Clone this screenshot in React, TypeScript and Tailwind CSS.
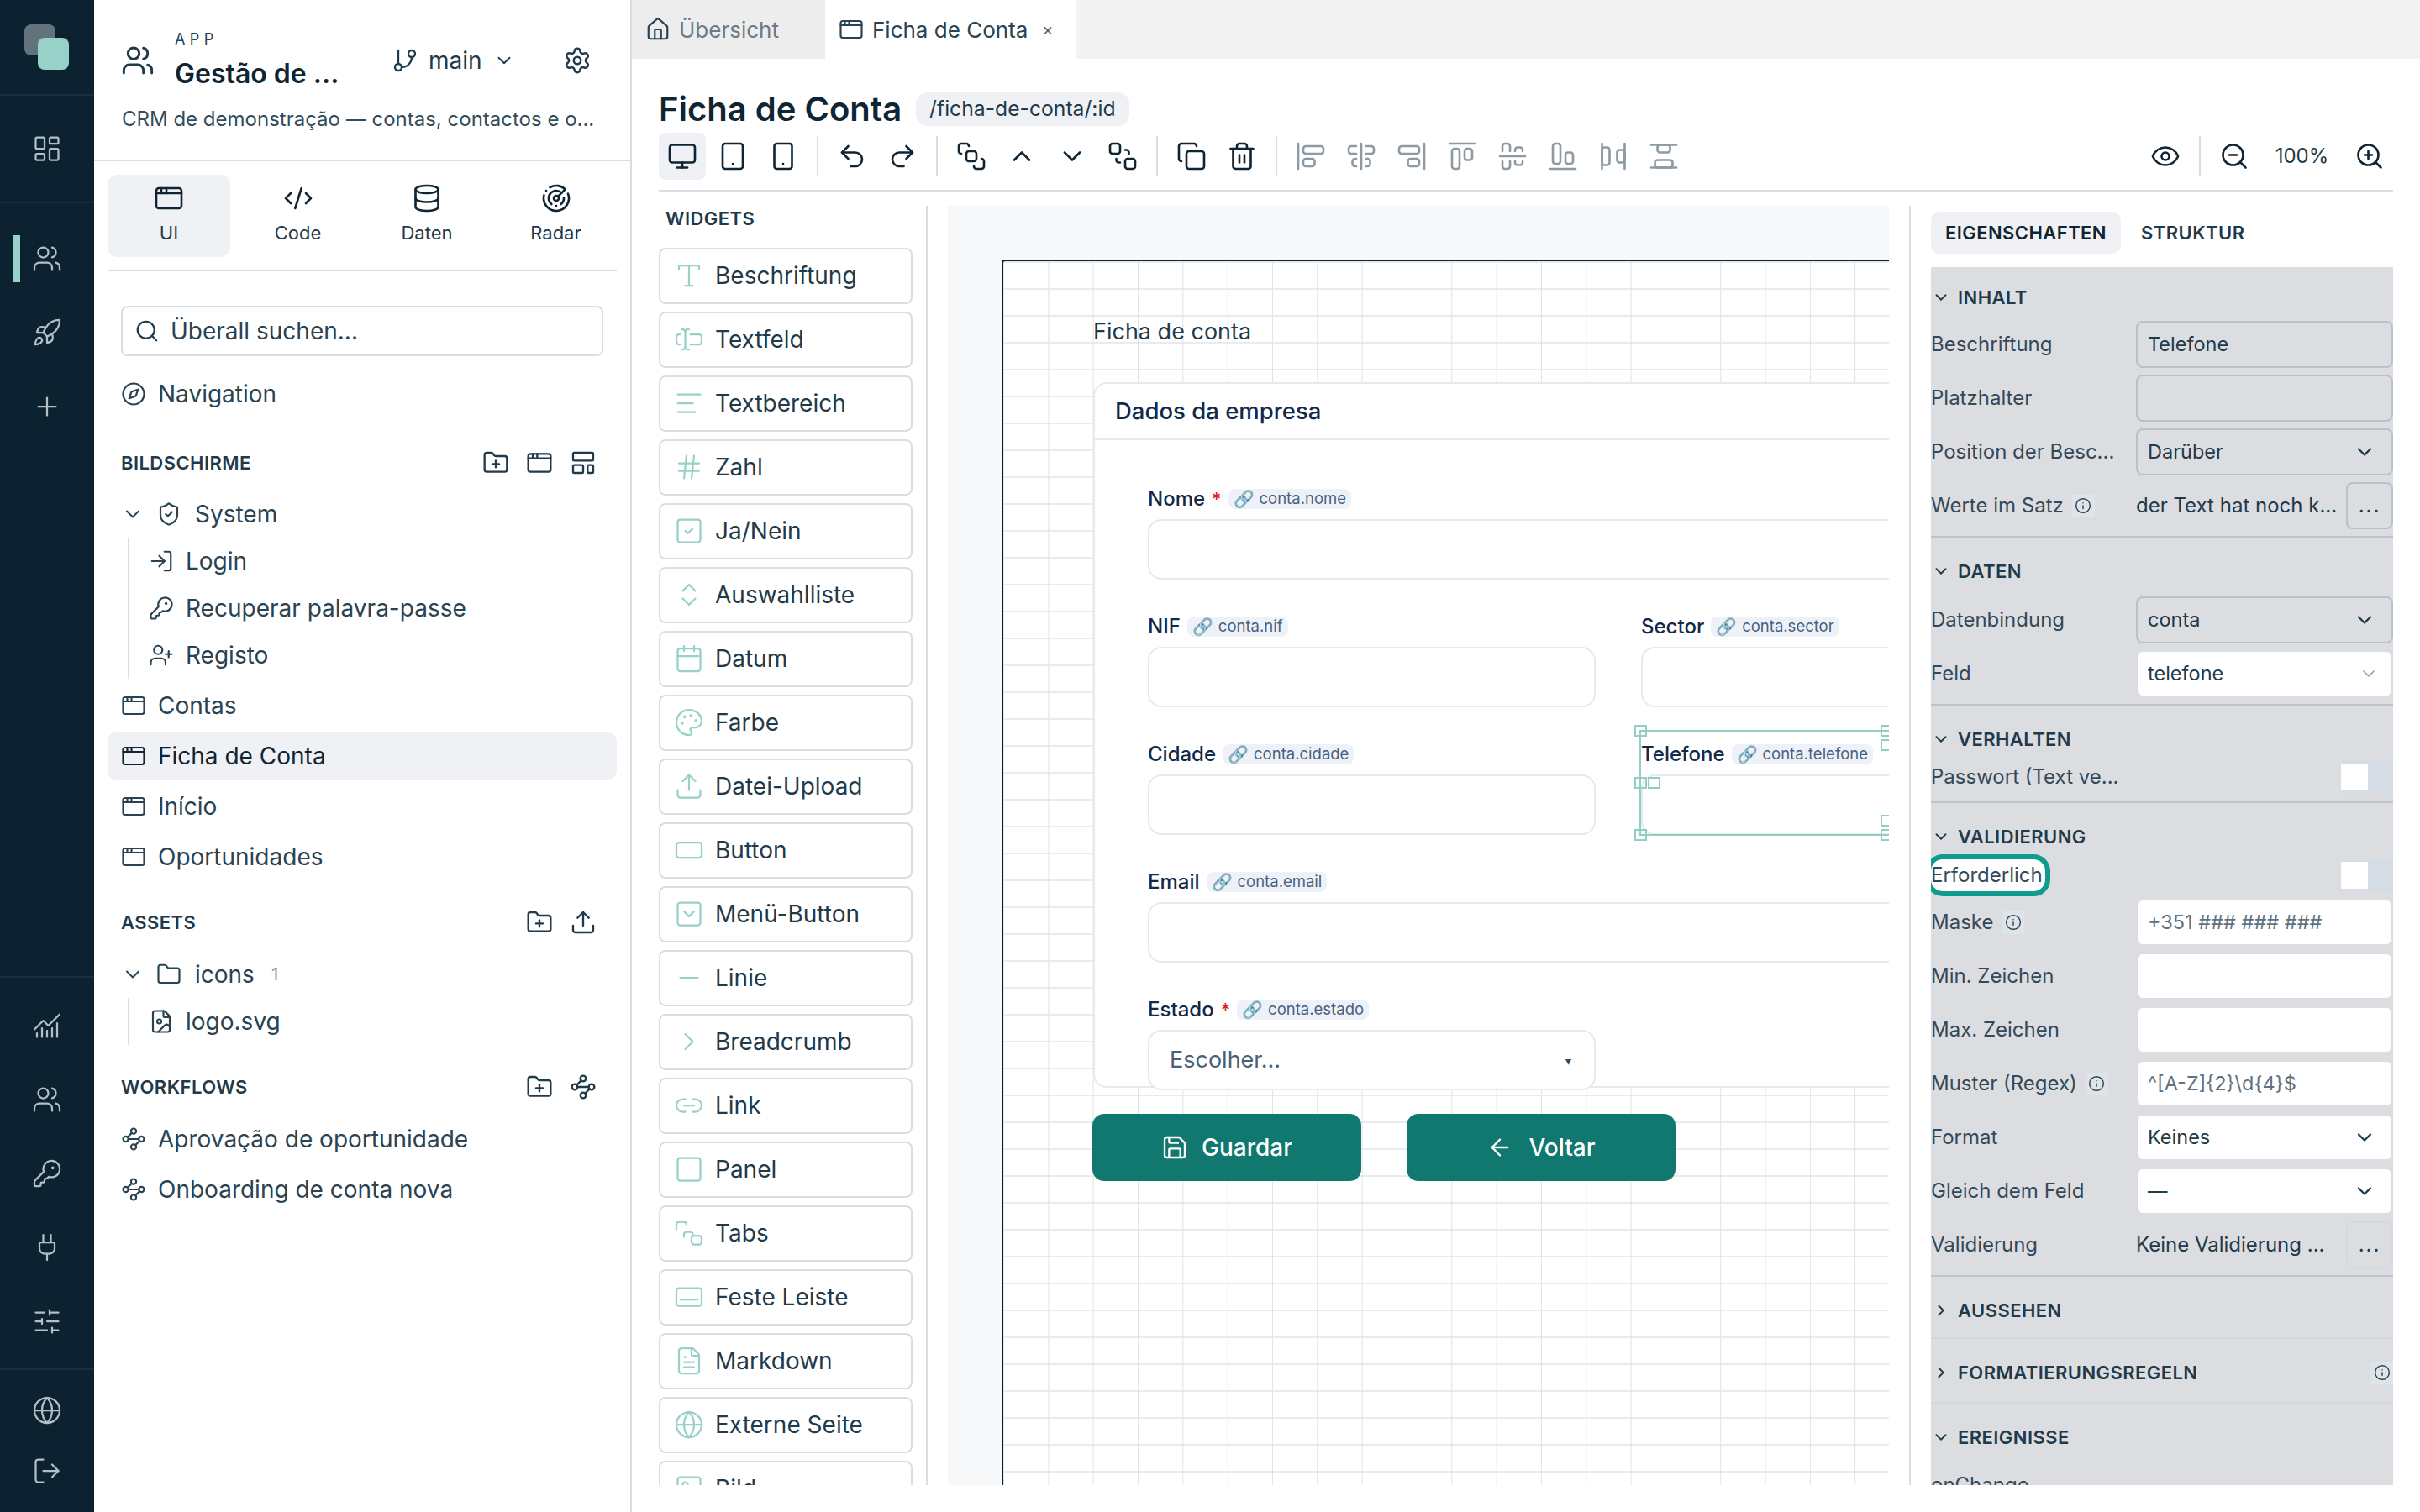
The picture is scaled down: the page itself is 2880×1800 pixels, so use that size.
import type { ReactNode } from 'react';
import {
  AlignCenterHorizontal, AlignCenterVertical, AlignEndHorizontal, AlignEndVertical,
  AlignHorizontalSpaceBetween, AlignLeft, AlignStartHorizontal, AlignStartVertical,
  AlignVerticalSpaceBetween, AppWindow, ArrowLeft, BringToFront, Calendar,
  ChartNoAxesCombined, ChevronDown, ChevronRight, ChevronsUpDown, ChevronUp, CodeXml, Compass, Copy,
  Database, Eye, FileImage, FileText, Folder, FolderPlus, GitBranch, Globe, Hash, House, Image,
  Info, KeyRound, LayoutDashboard, LayoutTemplate, Link2, LogIn, LogOut, Minus, Monitor, Palette,
  Plug, Plus, Radar, RectangleHorizontal, Redo2, Rocket, Save, Search, SendToBack, Settings, ShieldCheck,
  SlidersHorizontal, Smartphone, Square, SquareCheck, SquareChevronDown, Tablet, TextCursorInput,
  Trash2, Type, Undo2, Upload, UserPlus, Users, Waypoints, ZoomIn, ZoomOut,
} from 'lucide-react';

function TabsIcon({ size = 36, className = '' }: { size?: number; className?: string }) {
  return (
    <svg width={size} height={size} viewBox="0 0 24 24" fill="none" stroke="currentColor" strokeWidth={1.5} strokeLinecap="round" strokeLinejoin="round" className={className}>
      <path d="M2 9V5a2 2 0 0 1 2-2h4a2 2 0 0 1 2 2" />
      <path d="M8 15v-2a2 2 0 0 1 2-2h3a2 2 0 0 1 2 2" />
      <rect x="14" y="14" width="8" height="7" rx="2" />
    </svg>
  );
}

function BarIcon({ size = 36, className = '' }: { size?: number; className?: string }) {
  return (
    <svg width={size} height={size} viewBox="0 0 24 24" fill="none" stroke="currentColor" strokeWidth={1.5} strokeLinecap="round" strokeLinejoin="round" className={className}>
      <rect x="2" y="5" width="20" height="14" rx="2" />
      <path d="M5 14h14" />
    </svg>
  );
}

const WIDGETS = [
  { label: 'Beschriftung', icon: Type },
  { label: 'Textfeld', icon: TextCursorInput },
  { label: 'Textbereich', icon: AlignLeft },
  { label: 'Zahl', icon: Hash },
  { label: 'Ja/Nein', icon: SquareCheck },
  { label: 'Auswahlliste', icon: ChevronsUpDown },
  { label: 'Datum', icon: Calendar },
  { label: 'Farbe', icon: Palette },
  { label: 'Datei-Upload', icon: Upload },
  { label: 'Button', icon: RectangleHorizontal },
  { label: 'Menü-Button', icon: SquareChevronDown },
  { label: 'Linie', icon: Minus },
  { label: 'Breadcrumb', icon: ChevronRight },
  { label: 'Link', icon: Link2 },
  { label: 'Panel', icon: Square },
  { label: 'Tabs', icon: TabsIcon },
  { label: 'Feste Leiste', icon: BarIcon },
  { label: 'Markdown', icon: FileText },
  { label: 'Externe Seite', icon: Globe },
  { label: 'Bild', icon: Image },
];

function RailIcon({ children, active = false }: { children: ReactNode; active?: boolean }) {
  return (
    <div className="relative flex h-[88px] items-center justify-center text-[#b4bfc5]">
      {active && <div className="absolute left-[16px] top-[16px] h-[56px] w-[8px] bg-[#97d1c7]" />}
      {children}
    </div>
  );
}

function Rail() {
  const p = { size: 36, strokeWidth: 1.5 };
  return (
    <aside className="flex h-full w-[112px] shrink-0 flex-col bg-[#0d2230]">
      <div className="relative h-[114px] shrink-0 border-b-2 border-[#16303f]">
        <div className="absolute left-[29px] top-[29px] h-[37px] w-[37px] rounded-[8px] bg-[#64727d]" />
        <div className="absolute left-[45px] top-[45px] h-[38px] w-[37px] rounded-[8px] bg-[#97d1c7]" />
      </div>
      <div className="flex h-[128px] shrink-0 items-center justify-center border-b-2 border-[#16303f] text-[#b4bfc5]">
        <LayoutDashboard {...p} />
      </div>
      <div className="pt-[22px]">
        <RailIcon active><Users {...p} /></RailIcon>
        <RailIcon><Rocket {...p} /></RailIcon>
        <RailIcon><Plus {...p} /></RailIcon>
      </div>
      <div className="flex-1" />
      <div className="border-t-2 border-[#16303f] pt-[13px]">
        <RailIcon><ChartNoAxesCombined {...p} /></RailIcon>
        <RailIcon><Users {...p} /></RailIcon>
        <RailIcon><KeyRound {...p} /></RailIcon>
        <RailIcon><Plug {...p} /></RailIcon>
        <RailIcon><SlidersHorizontal {...p} /></RailIcon>
      </div>
      <div className="mt-[12px] border-t-2 border-[#16303f] pb-[20px] pt-[5px]">
        <div className="flex h-[86px] items-center justify-center text-[#b4bfc5]"><Globe {...p} /></div>
        <div className="flex h-[58px] items-center justify-center text-[#b4bfc5]"><LogOut {...p} /></div>
      </div>
    </aside>
  );
}

function SectionHead({ title, children }: { title: string; children: ReactNode }) {
  return (
    <div className="flex h-[40px] items-center justify-between pl-[32px] pr-[40px] text-[#1f3a4a]">
      <span className="text-[22px] font-semibold tracking-[0.02em] text-[#1f3a4a]">{title}</span>
      <div className="flex gap-[20px]">{children}</div>
    </div>
  );
}

function TreeRow({ icon, label, indent = 0, active = false }: { icon: ReactNode; label: string; indent?: number; active?: boolean }) {
  return (
    <div className={`flex h-[56px] items-center gap-[14px] rounded-[10px] text-[28px] ${active ? 'bg-[#eff1f5] text-[#0f2533]' : 'text-[#2a4352]'} ${indent ? 'pl-[49px]' : 'pl-[16px]'}`}>
      {icon}
      <span>{label}</span>
    </div>
  );
}

function Sidebar() {
  const t = { size: 30, strokeWidth: 1.75 };
  const h = { size: 32, strokeWidth: 1.75 };
  const tabs = [
    { label: 'UI', icon: AppWindow, active: true },
    { label: 'Code', icon: CodeXml },
    { label: 'Daten', icon: Database },
    { label: 'Radar', icon: Radar },
  ];
  return (
    <aside className="flex h-full w-[640px] shrink-0 flex-col border-r-2 border-[#d8dee5] text-[#2a4352]">
      <div className="h-[192px] shrink-0 border-b-2 border-[#d8dee5]">
        <div className="flex h-[114px] items-center pl-[32px] pt-[30px]">
          <Users size={40} strokeWidth={1.75} className="text-[#1f3a4a]" />
          <div className="ml-[24px] w-[258px] self-start pt-[6px]">
            <div className="text-[18px] leading-[22px] tracking-[0.3em] text-[#2a4352]">APP</div>
            <div className="mt-[10px] text-[32px] font-semibold leading-[40px] text-[#0f2533]">Gestão de ...</div>
          </div>
          <GitBranch size={32} strokeWidth={1.75} className="text-[#1f3a4a]" />
          <span className="ml-[12px] text-[28px] text-[#1f3a4a]">main</span>
          <ChevronDown size={26} strokeWidth={1.75} className="ml-[13px] text-[#1f3a4a]" />
          <Settings size={34} strokeWidth={1.75} className="ml-[57px] text-[#1f3a4a]" />
        </div>
        <div className="mt-[12px] pl-[33px] text-[24px] leading-[32px] text-[#354c5a]">CRM de demonstração — contas, contactos e o...</div>
      </div>

      <div className="mx-[16px] mt-[16px] flex h-[115px] shrink-0 gap-[7.5px] border-b-2 border-[#d8dee5]">
        {tabs.map(tab => (
          <div key={tab.label} className={`flex h-[98px] w-[146px] shrink-0 flex-col items-center rounded-[12px] pt-[10px] ${tab.active ? 'bg-[#eff1f5]' : ''}`}>
            <tab.icon size={36} strokeWidth={1.75} className="text-[#0f2533]" />
            <span className="mt-[9px] text-[22px] leading-[28px] text-[#1f3a4a]">{tab.label}</span>
          </div>
        ))}
      </div>

      <div className="mx-[32px] mt-[41px] flex h-[60px] shrink-0 items-center rounded-[8px] border-2 border-[#d8dee5] pl-[14px]">
        <Search size={30} strokeWidth={1.75} className="text-[#1f3a4a]" />
        <span className="ml-[13px] text-[28px] text-[#2a4352]">Überall suchen...</span>
      </div>

      <div className="mx-[16px] mt-[17px]">
        <TreeRow icon={<Compass {...t} />} label="Navigation" />
      </div>

      <div className="mt-[34px]">
        <SectionHead title="BILDSCHIRME">
          <FolderPlus {...h} /><AppWindow {...h} /><LayoutTemplate {...h} />
        </SectionHead>
      </div>

      <div className="mx-[16px] mt-[13px] flex flex-col">
        <div className="flex h-[56px] items-center pl-[16px] text-[28px]">
          <ChevronDown size={28} strokeWidth={1.75} />
          <ShieldCheck size={30} strokeWidth={1.75} className="ml-[14px]" />
          <span className="ml-[16px]">System</span>
        </div>
        <div className="relative">
          <div className="absolute bottom-0 left-[24px] top-0 w-[2px] bg-[#d8dee5]" />
          <TreeRow indent={1} icon={<LogIn {...t} />} label="Login" />
          <TreeRow indent={1} icon={<KeyRound {...t} />} label="Recuperar palavra-passe" />
          <TreeRow indent={1} icon={<UserPlus {...t} />} label="Registo" />
        </div>
        <div className="mt-[4px] flex flex-col gap-[4px]">
          <TreeRow icon={<AppWindow {...t} />} label="Contas" />
          <TreeRow icon={<AppWindow {...t} />} label="Ficha de Conta" active />
          <TreeRow icon={<AppWindow {...t} />} label="Início" />
          <TreeRow icon={<AppWindow {...t} />} label="Oportunidades" />
        </div>
      </div>

      <div className="mt-[30px]">
        <SectionHead title="ASSETS">
          <FolderPlus {...h} /><Upload {...h} />
        </SectionHead>
      </div>

      <div className="mx-[16px] mt-[14px]">
        <div className="flex h-[56px] items-center pl-[16px] text-[28px]">
          <ChevronDown size={28} strokeWidth={1.75} />
          <Folder size={30} strokeWidth={1.75} className="ml-[14px]" />
          <span className="ml-[16px]">icons</span>
          <span className="ml-[20px] text-[20px] text-[#7b8a94]">1</span>
        </div>
        <div className="relative">
          <div className="absolute bottom-0 left-[24px] top-0 w-[2px] bg-[#d8dee5]" />
          <TreeRow indent={1} icon={<FileImage {...t} />} label="logo.svg" />
        </div>
      </div>

      <div className="mt-[30px]">
        <SectionHead title="WORKFLOWS">
          <FolderPlus {...h} /><Waypoints {...h} />
        </SectionHead>
      </div>

      <div className="mx-[16px] mt-[14px] flex flex-col gap-[4px]">
        <TreeRow icon={<Waypoints {...t} />} label="Aprovação de oportunidade" />
        <TreeRow icon={<Waypoints {...t} />} label="Onboarding de conta nova" />
      </div>
    </aside>
  );
}

function ToolBtn({ icon: Icon, active = false, muted = false }: { icon: typeof Monitor; active?: boolean; muted?: boolean }) {
  return (
    <div className={`flex h-[56px] w-[56px] shrink-0 items-center justify-center rounded-[8px] ${active ? 'bg-[#eff1f5]' : ''} ${muted ? 'text-[#8d9aa3]' : 'text-[#0f2533]'}`}>
      <Icon size={36} strokeWidth={1.75} />
    </div>
  );
}

function Sep() {
  return <div className="mx-[8px] h-[48px] w-[2px] shrink-0 bg-[#d8dee5]" />;
}

function Toolbar() {
  return (
    <div className="mt-[8px] flex items-center gap-[4px] border-b-2 border-[#d8dee5] pb-[12px]">
      <ToolBtn icon={Monitor} active />
      <ToolBtn icon={Tablet} />
      <ToolBtn icon={Smartphone} />
      <Sep />
      <ToolBtn icon={Undo2} />
      <ToolBtn icon={Redo2} />
      <Sep />
      <ToolBtn icon={BringToFront} />
      <ToolBtn icon={ChevronUp} />
      <ToolBtn icon={ChevronDown} />
      <ToolBtn icon={SendToBack} />
      <Sep />
      <ToolBtn icon={Copy} />
      <ToolBtn icon={Trash2} />
      <Sep />
      <ToolBtn icon={AlignStartVertical} muted />
      <ToolBtn icon={AlignCenterVertical} muted />
      <ToolBtn icon={AlignEndVertical} muted />
      <ToolBtn icon={AlignStartHorizontal} muted />
      <ToolBtn icon={AlignCenterHorizontal} muted />
      <ToolBtn icon={AlignEndHorizontal} muted />
      <ToolBtn icon={AlignHorizontalSpaceBetween} muted />
      <ToolBtn icon={AlignVerticalSpaceBetween} muted />
      <div className="flex-1" />
      <ToolBtn icon={Eye} />
      <Sep />
      <ToolBtn icon={ZoomOut} />
      <span className="w-[97px] text-center text-[24px] text-[#1f3a4a]">100%</span>
      <ToolBtn icon={ZoomIn} />
    </div>
  );
}

function WidgetList() {
  return (
    <div className="h-full w-[320px] shrink-0 overflow-hidden border-r-2 border-[#d8dee5]">
      <div className="flex h-[30px] items-center pl-[8px] text-[22px] font-semibold tracking-[0.02em] text-[#1f3a4a]">WIDGETS</div>
      <div className="mt-[20px] flex w-[302px] flex-col gap-[9px]">
        {WIDGETS.map(w => (
          <div key={w.label} className="flex h-[67px] shrink-0 items-center rounded-[8px] border-2 border-[#d8dee5] pb-[1px] pl-[16px] text-[28px] text-[#1f3a4a]">
            <w.icon size={36} strokeWidth={1.5} className="text-[#97d1c7]" />
            <span className="ml-[13px]">{w.label}</span>
          </div>
        ))}
      </div>
    </div>
  );
}

function Tag({ text }: { text: string }) {
  return (
    <span className="ml-[8px] inline-flex h-[24px] items-center rounded-[8px] bg-[#eef2f8] px-[6px] text-[18.5px] font-normal text-[#466280]">
      <span className="mr-[6px] text-[20px]">🔗</span>
      {text}
    </span>
  );
}

function FieldLabel({ label, tag, required = false }: { label: string; tag: string; required?: boolean }) {
  return (
    <div className="flex h-[32px] items-center text-[24px] font-medium text-[#12294a]">
      {label}
      {required && <span className="ml-[8px] text-[22px] text-[#e11d1d]">*</span>}
      <Tag text={tag} />
    </div>
  );
}

function FieldBox({ children }: { children?: ReactNode }) {
  return <div className="relative z-10 mt-[8px] flex h-[72px] items-center justify-between rounded-[16px] border-2 border-[#e5e9f0] bg-white pl-[24px] pr-[27px]">{children}</div>;
}

function Handle({ className }: { className: string }) {
  return <div className={`absolute z-20 h-[14px] w-[15px] border-2 border-[#91cfc3] ${className}`} />;
}

function Canvas() {
  return (
    <div className="ml-[24px] h-full w-[1120px] shrink-0 overflow-hidden bg-[#f7f8fa] pl-[64px] pt-[64px]">
      <div className="h-[1600px] w-[1500px] rounded-tl-[4px] border-2 border-[#0d2230] bg-white bg-[linear-gradient(to_right,#dfe2e6_1px,transparent_1px),linear-gradient(to_bottom,#e9ebee_2px,transparent_2px)] bg-[size:53.33px_32px] pl-[107px] pt-[64px]">
        <div className="flex h-[40px] items-center text-[27px] text-[#1f3a4a]">Ficha de conta</div>
        <div className="mt-[40px] h-[840px] w-[1300px] rounded-[16px] border-2 border-[#e5e9f0] bg-white">
          <div className="flex h-[67px] items-center border-b-2 border-[#e5e9f0] pl-[24px] text-[27.5px] font-medium text-[#12294a]">Dados da empresa</div>
          <div className="w-[1120px] pl-[63px] pt-[54px]">
            <FieldLabel label="Nome" tag="conta.nome" required />
            <FieldBox />
            <div className="mt-[40px] grid grid-cols-[533px_533px] gap-x-[54px] gap-y-[40px]">
              <div><FieldLabel label="NIF" tag="conta.nif" /><FieldBox /></div>
              <div><FieldLabel label="Sector" tag="conta.sector" /><FieldBox /></div>
              <div><FieldLabel label="Cidade" tag="conta.cidade" /><FieldBox /></div>
              <div className="relative">
                <FieldLabel label="Telefone" tag="conta.telefone" />
                <FieldBox />
                <div className="absolute -left-[2px] -top-[13px] z-20 h-[126px] w-[540px] border-2 border-[#91cfc3]" />
                <Handle className="-left-[8px] -top-[19px]" />
                <Handle className="-left-[8px] top-[43px]" />
                <Handle className="left-[8px] top-[43px]" />
                <Handle className="-left-[8px] top-[105px]" />
                <Handle className="left-[285px] -top-[19px]" />
                <Handle className="left-[285px] -top-[2px]" />
                <Handle className="left-[285px] top-[88px]" />
                <Handle className="left-[285px] top-[105px]" />
              </div>
            </div>
            <div className="mt-[40px]"><FieldLabel label="Email" tag="conta.email" /><FieldBox /></div>
            <div className="mt-[40px] w-[533px]">
              <FieldLabel label="Estado" tag="conta.estado" required />
              <FieldBox>
                <span className="text-[27px] text-[#4a6076]">Escolher...</span>
                <span className="text-[14px] text-[#33495a]">▾</span>
              </FieldBox>
            </div>
          </div>
        </div>
        <div className="-ml-[1px] mt-[31px] flex gap-[54px]">
          <div className="flex h-[80px] w-[320px] items-center justify-center rounded-[14px] bg-[#10786e] text-[28px] font-medium text-white">
            <Save size={32} strokeWidth={1.75} />
            <span className="ml-[16px]">Guardar</span>
          </div>
          <div className="flex h-[80px] w-[320px] items-center justify-center rounded-[14px] bg-[#10786e] text-[28px] font-medium text-white">
            <ArrowLeft size={32} strokeWidth={1.75} />
            <span className="ml-[18px]">Voltar</span>
          </div>
        </div>
      </div>
    </div>
  );
}

function PropHead({ title, open = true, info = false }: { title: string; open?: boolean; info?: boolean }) {
  const Chev = open ? ChevronDown : ChevronRight;
  return (
    <div className="flex h-[50px] items-center text-[#1f3a4a]">
      <Chev size={22} strokeWidth={2} className="ml-[1px] text-[#1f3a4a]" />
      <span className="ml-[9px] text-[22px] font-semibold tracking-[0.02em]">{title}</span>
      {info && <InfoBadge className="ml-auto" />}
    </div>
  );
}

function InfoBadge({ className = 'ml-[10px]' }: { className?: string }) {
  return (
    <span className={`flex h-[27px] w-[27px] items-center justify-center bg-[#dfe4e8] ${className}`}>
      <Info size={20} strokeWidth={1.75} className="text-[#2a4352]" />
    </span>
  );
}

function PropRow({ label, info = false, children }: { label: string; info?: boolean; children?: ReactNode }) {
  return (
    <div className="flex h-[56px] items-center">
      <div className="flex w-[244px] shrink-0 items-center text-[24px] text-[#33495a]">
        {label}
        {info && <InfoBadge />}
      </div>
      {children}
    </div>
  );
}

function DisabledBox({ children }: { children?: ReactNode }) {
  return <div className="flex h-[56px] w-[306px] items-center justify-between rounded-[8px] border-2 border-[#b8c0c8] pl-[12px] pr-[18px] text-[23.5px] text-[#1f3a4a]">{children}</div>;
}

function WhiteBox({ children, muted = false }: { children?: ReactNode; muted?: boolean }) {
  return <div className={`flex h-[56px] w-[306px] items-center justify-between rounded-[8px] border-2 border-[#dcdde1] bg-white pl-[12px] pr-[18px] text-[23.5px] ${muted ? 'text-[#5f7280]' : 'text-[#1f3a4a]'}`}>{children}</div>;
}

function Toggle() {
  return (
    <div className="ml-auto flex h-[38px] w-[62px] items-center bg-[#d5dce3]">
      <div className="h-[32px] w-[32px] bg-white" />
    </div>
  );
}

function PropsPanel() {
  const chev = <ChevronDown size={28} strokeWidth={2} className="text-[#1f3a4a]" />;
  return (
    <div className="ml-[24px] h-full w-[576px] shrink-0 overflow-hidden border-l-2 border-[#d8dee5] pl-[24px]">
      <div className="mt-[7px] flex h-[50px] items-center text-[22px] font-semibold tracking-[0.02em] text-[#1f3a4a]">
        <div className="flex h-[50px] w-[226px] items-center justify-center rounded-[10px] bg-[#eff1f5] text-[#0f2533]">EIGENSCHAFTEN</div>
        <div className="ml-[24px]">STRUKTUR</div>
      </div>
      <div className="mt-[16px] h-[1450px] w-[550px] overflow-hidden bg-[#dcdde1]">
        <div className="h-[322px] border-b-2 border-[#bcc4cb] pt-[11px]">
          <PropHead title="INHALT" />
          <div className="mt-[3px] flex flex-col gap-[8px]">
            <PropRow label="Beschriftung"><DisabledBox>Telefone</DisabledBox></PropRow>
            <PropRow label="Platzhalter"><DisabledBox /></PropRow>
            <PropRow label="Position der Besc..."><DisabledBox>Darüber{chev}</DisabledBox></PropRow>
            <PropRow label="Werte im Satz" info>
              <span className="whitespace-nowrap text-[24px] text-[#1f3a4a]">der Text hat noch k...</span>
              <div className="ml-auto flex h-[56px] w-[56px] shrink-0 items-center justify-center rounded-[8px] border-2 border-[#b8c0c8] text-[24px] tracking-[0.08em] text-[#1f3a4a]">...</div>
            </PropRow>
          </div>
        </div>
        <div className="h-[200px] border-b-2 border-[#bcc4cb] pt-[15px]">
          <PropHead title="DATEN" />
          <div className="mt-[5px] flex flex-col gap-[8px]">
            <PropRow label="Datenbindung"><DisabledBox>conta{chev}</DisabledBox></PropRow>
            <PropRow label="Feld"><WhiteBox>telefone<ChevronDown size={24} strokeWidth={1.5} className="-mr-[3px] text-[#8d9aa3]" /></WhiteBox></PropRow>
          </div>
        </div>
        <div className="h-[116px] border-b-2 border-[#bcc4cb] pt-[15px]">
          <PropHead title="VERHALTEN" />
          <div className="mt-[1px] flex h-[38px] items-center text-[24px] text-[#33495a]">Passwort (Text ve...<Toggle /></div>
        </div>
        <div className="h-[564px] border-b-2 border-[#bcc4cb] pt-[15px]">
          <PropHead title="VALIDIERUNG" />
          <div className="mt-[2px] flex h-[38px] items-center text-[24px] text-[#33495a]">
            <span className="flex h-[38px] w-[136px] items-center rounded-[14px] bg-white outline-[6px] outline-solid outline-[#0f9b8e]">Erforderlich</span>
            <Toggle />
          </div>
          <div className="mt-[9px] flex flex-col gap-[8px]">
            <PropRow label="Maske" info><WhiteBox muted>+351 ### ### ###</WhiteBox></PropRow>
            <PropRow label="Min. Zeichen"><WhiteBox /></PropRow>
            <PropRow label="Max. Zeichen"><WhiteBox /></PropRow>
            <PropRow label="Muster (Regex)" info><WhiteBox muted>^[A-Z]{'{2}'}\d{'{4}'}$</WhiteBox></PropRow>
            <PropRow label="Format"><WhiteBox>Keines{chev}</WhiteBox></PropRow>
            <PropRow label="Gleich dem Feld"><WhiteBox>—{chev}</WhiteBox></PropRow>
            <PropRow label="Validierung">
              <span className="whitespace-nowrap text-[24px] text-[#1f3a4a]">Keine Validierung ...</span>
              <div className="ml-auto flex h-[56px] w-[56px] shrink-0 items-center justify-center rounded-[8px] border-2 border-[#d5d9dd] text-[24px] tracking-[0.08em] text-[#1f3a4a]">...</div>
            </PropRow>
          </div>
        </div>
        <div className="h-[74px] border-b-2 border-[#d3d6da] pt-[15px]"><PropHead title="AUSSEHEN" open={false} /></div>
        <div className="h-[77px] border-b-2 border-[#d3d6da] pt-[15px]"><PropHead title="FORMATIERUNGSREGELN" open={false} info /></div>
        <div className="pt-[15px]">
          <PropHead title="EREIGNISSE" />
          <div className="mt-[4px] flex h-[56px] items-center text-[24px] text-[#33495a]">onChange</div>
        </div>
      </div>
    </div>
  );
}

export default function App() {
  return (
    <div className="flex h-[1800px] w-[2880px] overflow-hidden bg-white font-['Inter',sans-serif]">
      <Rail />
      <Sidebar />
      <main className="flex h-full min-w-0 flex-1 flex-col">
        <div className="flex h-[70px] shrink-0 bg-[#f3f3f3]">
          <div className="flex w-[230px] items-center bg-[#ededed] pl-[16px] text-[26px] text-[#6b7a85]">
            <House size={30} strokeWidth={1.75} className="text-[#2a4352]" />
            <span className="ml-[10px]">Übersicht</span>
          </div>
          <div className="flex w-[298px] items-center bg-white pl-[16px] text-[26px] text-[#2a4352]">
            <AppWindow size={30} strokeWidth={1.75} />
            <span className="ml-[10px]">Ficha de Conta</span>
            <span className="ml-[17px] text-[20px] text-[#55656f]">×</span>
          </div>
        </div>
        <div className="flex min-h-0 flex-1 flex-col px-[32px] pb-[32px]">
          <div className="mt-[40px] flex h-[40px] shrink-0 items-center">
            <h1 className="text-[40px] font-semibold text-[#0f2533]">Ficha de Conta</h1>
            <span className="ml-[17px] flex h-[40px] items-center rounded-[14px] bg-[#eff1f5] px-[16px] text-[24.7px] text-[#1f3a4a]">/ficha-de-conta/:id</span>
          </div>
          <Toolbar />
          <div className="mt-[17px] flex min-h-0 flex-1">
            <WidgetList />
            <Canvas />
            <PropsPanel />
          </div>
        </div>
      </main>
    </div>
  );
}
